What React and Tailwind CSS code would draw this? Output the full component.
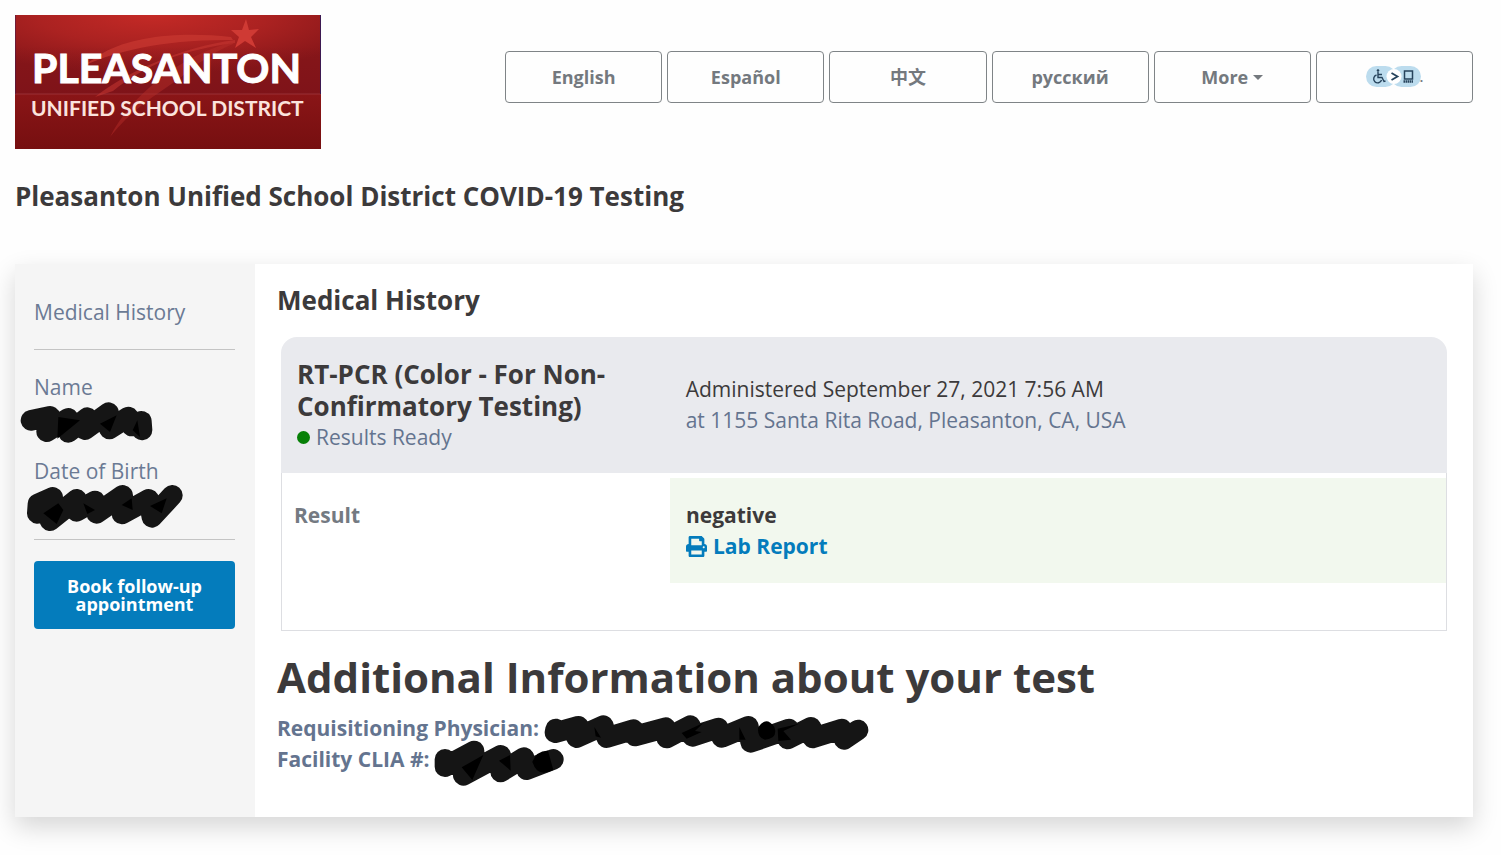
import { FaPrint } from 'react-icons/fa'

const languages = ['English', 'Español', '中文', 'русский']

function Logo() {
  return (
    <svg viewBox="0 0 306 134" className="block h-[134px] w-[306px]" role="img" aria-label="Pleasanton Unified School District">
      <defs>
        <radialGradient id="glow" cx="0.45" cy="0" r="0.75">
          <stop offset="0" stopColor="#c42a26" />
          <stop offset="0.5" stopColor="#ab2221" />
          <stop offset="1" stopColor="#861619" />
        </radialGradient>
        <linearGradient id="base" x1="0" y1="0" x2="0" y2="1">
          <stop offset="0" stopColor="#8a1517" />
          <stop offset="1" stopColor="#760f10" />
        </linearGradient>
        <linearGradient id="shade" x1="0" y1="0" x2="0" y2="1">
          <stop offset="0.4" stopColor="#7c1219" stopOpacity="0" />
          <stop offset="1" stopColor="#7c1219" stopOpacity="0.7" />
        </linearGradient>
      </defs>
      <rect width="306" height="79" fill="url(#glow)" />
      <rect width="306" height="79" fill="url(#shade)" />
      <rect y="79" width="306" height="55" fill="url(#base)" />
      <path d="M0 79h306" stroke="#a9444a" strokeWidth="1" opacity="0.6" />
      <path d="M0 0v79M305.500 0v79" stroke="#3c1a52" strokeWidth="1" />
      <path d="M216 22C170 17 120 20 88 38L66 52C100 36 150 24 218 25Z" fill="#cb3a33" opacity="0.65" />
      <path d="M220 25C165 32 110 58 80 82L98 76C130 50 170 34 220 28Z" fill="#cb3a33" opacity="0.5" />
      <path d="M218 27C165 40 115 82 95 122C115 96 140 80 164 64C180 50 200 36 218 29Z" fill="#b92f2b" opacity="0.45" />
      <path d="M231 4l3 11 10-1-8 8 5 11-11-7-10 7 4-11-8-7 11 0Z" fill="#cf3a34" />
      <text x="17" y="68" fontFamily="Lato, sans-serif" fontWeight="700" fontSize="41" fill="#fff" stroke="#fff" strokeWidth="1">PLEASANTON</text>
      <text x="16" y="101" fontFamily="Lato, sans-serif" fontWeight="700" fontSize="21" fill="#fbe3dd">UNIFIED SCHOOL DISTRICT</text>
    </svg>
  )
}

function AccessIcon() {
  return (
    <span className="inline-flex items-end">
      <svg viewBox="0 0 55 22" className="h-[22px] w-[55px]" aria-hidden="true">
        <rect width="30" height="21" rx="10.500" fill="#bcdcee" />
        <rect x="25" width="30" height="21" rx="10.500" fill="#bcdcee" />
        <circle cx="28" cy="10.500" r="7.500" fill="#fff" />
        <path d="M25.500 7l6 3.500-6 3.500" fill="none" stroke="#26435c" strokeWidth="1.800" />
        <path d="M38.500 5h8v8h-8z" fill="none" stroke="#26435c" strokeWidth="1.500" />
        <path d="M37.500 15.500h10" stroke="#26435c" strokeWidth="2.500" strokeDasharray="1.500 0.500" />
        <circle cx="12" cy="4.500" r="1.300" fill="#26435c" />
        <path d="M12 6v5.500h4l2 4 1.500-.5M12 8.500h4M10.500 9a4 4 0 1 0 5 5" fill="none" stroke="#26435c" strokeWidth="1.400" />
      </svg>
      <span className="-ml-px text-xs leading-[20px]">.</span>
    </span>
  )
}

// marker scribble laid over a hidden value
function Redacted({ className, viewBox, stroke, blots }) {
  return (
    <svg viewBox={viewBox} className={className} role="img" aria-label="Redacted">
      <polyline points={stroke} fill="none" stroke="#151515" strokeWidth="62" strokeLinecap="round" strokeLinejoin="round" />
      <path d={blots} fill="#000" />
    </svg>
  )
}

function Sidebar() {
  return (
    <aside className="w-[240px] shrink-0 bg-[#f5f5f5] pt-[33px] pr-5 pl-[19px] text-[21px] leading-[31px] text-[#6b7a94]">
      <a href="#history" className="block">Medical History</a>
      <hr className="mt-[21px] border-[#c4c4c4]" />
      <dl className="mt-[22px]">
        <dt>Name</dt>
        <dd className="relative h-[53px]">
          <Redacted
            className="absolute -top-[2px] -left-[14px] h-[42px] w-[134px]"
            viewBox="60 92 402 126"
            stroke="93,150 150,138 140,184 205,144 205,186 262,142 255,178 326,127 328,176 385,140 395,167 424,153 426,179"
            blots="M172 205L240 150L175 140ZM300 160L330 185L350 135ZM398 180L420 200L412 150Z"
          />
        </dd>
        <dt>Date of Birth</dt>
        <dd className="relative h-[52px]">
          <Redacted
            className="absolute -top-[3px] -left-[8px] h-[48px] w-[158px]"
            viewBox="78 342 474 144"
            stroke="112,430 114,402 158,382 150,452 230,388 230,424 285,393 290,430 368,376 366,432 446,388 456,442 517,376"
            blots="M130 430L175 400L190 420L170 462ZM250 400L285 420L262 432ZM365 405L395 385L398 420ZM450 408L500 385L485 430Z"
          />
        </dd>
      </dl>
      <hr className="border-[#c4c4c4]" />
      <button
        type="button"
        className="mt-[21px] w-full rounded-[4px] bg-[#047cbc] px-6 py-4 text-lg leading-[18px] font-bold text-white"
      >
        Book follow-up appointment
      </button>
    </aside>
  )
}

function ResultPanel() {
  return (
    <div className="mx-1 mt-[21px]">
      <div className="flex h-[136px] items-center rounded-t-[16px] bg-[#e9eaee]">
        <div className="w-1/3 pl-4">
          <h3 className="text-[26px] leading-[32px] font-bold text-[#3c3a3b]">RT-PCR (Color - For Non-Confirmatory Testing)</h3>
          <p className="flex items-center gap-[6px]">
            <span className="size-[13px] rounded-full bg-[#078007]" />
            Results Ready
          </p>
        </div>
        <div className="w-2/3 pl-4">
          <p className="text-[#3c3a3b]">Administered September 27, 2021 7:56 AM</p>
          <p>at 1155 Santa Rita Road, Pleasanton, CA, USA</p>
        </div>
      </div>
      <div className="flex h-[158px] items-start border border-t-0 border-[#dddee2] pt-[5px] font-bold">
        <p className="w-1/3 pt-[22px] pl-3 text-[#747a82]">Result</p>
        <div className="h-[105px] w-2/3 bg-[#f2f8ee] pt-[22px] pl-4">
          <p className="text-[#3c3a3b]">negative</p>
          <a href="#report" className="inline-flex items-center gap-[6px] text-[#047cbc]">
            <FaPrint />
            Lab Report
          </a>
        </div>
      </div>
    </div>
  )
}

export default function App() {
  return (
    <div className="min-h-screen bg-[#fefefe] pt-[15px] pr-7 pb-[38px] pl-[15px] font-['Open_Sans','Noto_Sans_CJK_SC',sans-serif]">
      <header className="flex items-start justify-between">
        <Logo />
        <nav aria-label="Language" className="mt-9 grid w-2/3 grid-cols-6 gap-[5px] pl-1 text-lg leading-[26px] font-bold text-[#74797e]">
          {languages.map((name) => (
            <button key={name} type="button" className="h-[52px] rounded-[4px] border border-[#7f8487]">
              {name}
            </button>
          ))}
          <button type="button" className="flex h-[52px] items-center justify-center gap-[5px] rounded-[4px] border border-[#7f8487]">
            More
            <svg viewBox="0 0 10 5" className="h-[5px] w-[10px]" aria-hidden="true">
              <path d="M0 0h10L5 5z" fill="currentColor" />
            </svg>
          </button>
          <button type="button" aria-label="Accessibility" className="flex h-[52px] items-center justify-center rounded-[4px] border border-[#7f8487]">
            <AccessIcon />
          </button>
        </nav>
      </header>

      <h1 className="mt-[31px] text-[26px] leading-[32px] font-bold text-[#3c3a3b]">
        Pleasanton Unified School District COVID-19 Testing
      </h1>

      <main className="mt-[52px] flex min-h-[553px] bg-white shadow-[0_10px_24px_rgba(0,0,0,0.16)]">
        <Sidebar />
        <section className="min-w-0 grow px-[22px] pt-5 text-[21px] leading-[31px] text-[#64748f]">
          <h2 className="text-[26px] leading-[32px] font-bold text-[#3c3a3b]">Medical History</h2>
          <ResultPanel />
          <h2 className="mt-5 text-[42px] leading-[52px] font-bold text-[#3c3a3b]">Additional Information about your test</h2>
          <dl className="mt-[10px] font-bold">
            <div className="flex">
              <dt>Requisitioning Physician:</dt>
              <dd className="relative">
                <Redacted
                  className="absolute top-0 left-1 h-[42px] w-[328px]"
                  viewBox="34 38 984 126"
                  stroke="72,86 70,97 140,78 135,112 215,76 225,112 305,88 310,107 402,82 405,113 476,76 482,108 560,83 570,111 650,78 657,126 772,86 768,116 838,81 843,113 930,86 937,117 979,89"
                  blots="M188 80L208 112L192 108ZM450 98L515 68L490 92L510 95L465 115ZM623 80L642 118L623 118ZM680 80Q704 45 728 80Q740 115 700 118Q675 110 680 80ZM738 85L802 70L755 92L778 118L740 122Z"
                />
              </dd>
            </div>
            <div className="flex">
              <dt>Facility CLIA #:</dt>
              <dd className="relative">
                <Redacted
                  className="absolute -top-[5px] left-1 h-[48px] w-[132px]"
                  viewBox="487 117 396 144"
                  stroke="523,178 523,200 610,153 578,226 690,166 690,216 760,173 768,209 848,178"
                  blots="M573 202L638 165L605 240ZM685 182L718 165L720 212ZM785 185Q800 150 832 152L848 210Q800 235 785 185Z"
                />
              </dd>
            </div>
          </dl>
        </section>
      </main>
    </div>
  )
}
